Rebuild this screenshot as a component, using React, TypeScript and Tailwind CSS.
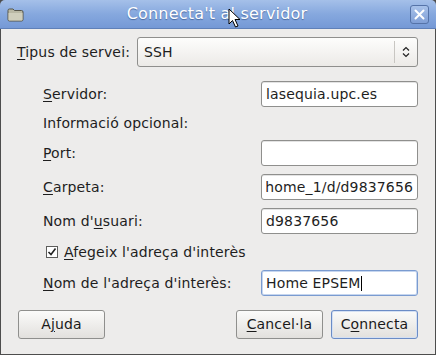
import React from 'react';

const font = { fontFamily: '"DejaVu Sans", Verdana, sans-serif' };

function U({ children }: { children: React.ReactNode }) {
  return <span className="underline underline-offset-2 decoration-1">{children}</span>;
}

function Field({ children, focused }: { children?: React.ReactNode; focused?: boolean }) {
  return (
    <div
      className={`w-[157px] h-[26px] rounded-[3px] bg-white border flex items-center px-[4px] overflow-hidden whitespace-nowrap
        ${focused ? 'border-[#7a9bd0] shadow-[inset_0_0_0_1px_#c6d6ef]' : 'border-[#8f8f8d] shadow-[inset_0_1px_0_#e3e3e3]'}`}
    >
      {children}
    </div>
  );
}

function Row({ label, children }: { label: React.ReactNode; children?: React.ReactNode }) {
  return (
    <div className="flex items-center justify-between pl-[42px] pr-[17px]">
      <span>{label}</span>
      {children}
    </div>
  );
}

function Btn({ children, def, className = '' }: { children: React.ReactNode; def?: boolean; className?: string }) {
  return (
    <button
      className={`w-[87px] h-[29px] rounded-[3px] border bg-gradient-to-b from-[#fbfbfa] to-[#e2e0dd] text-[#1a1a1a] flex items-center justify-center
        ${def ? 'border-[#6b8cc6] shadow-[inset_0_0_0_1px_#d4e0f3]' : 'border-[#8f8f8d]'} ${className}`}
    >
      {children}
    </button>
  );
}

export default function App() {
  return (
    <div className="w-[436px] h-[355px] bg-[#4d4d4d] flex flex-col text-[14px] tracking-[0.15px] text-[#1e1e1e]" style={font}>
      {/* Title bar */}
      <div className="relative h-[29px] shrink-0 rounded-t-[5px] bg-gradient-to-b from-[#a5c0e9] via-[#86a8de] to-[#7599d6] border-b border-[#5f80b8] flex items-center px-[7px]">
        <svg width="17" height="15" viewBox="0 0 17 15" className="shrink-0">
          <path d="M1 3.5 Q1 2 2.5 2 H6 L7.5 3.5 H14.5 Q16 3.5 16 5 V12.5 Q16 14 14.5 14 H2.5 Q1 14 1 12.5 Z" fill="#b9b8a4" stroke="#55554a" strokeWidth="1" />
          <path d="M1.5 6 H15.5 V12.5 Q15.5 13.5 14.5 13.5 H2.5 Q1.5 13.5 1.5 12.5 Z" fill="#cfcebc" />
        </svg>
        <div className="flex-1 text-center text-white text-[16px] font-normal tracking-[0.2px] [text-shadow:0_1px_1px_#4a6aa0]">
          Connecta't al servidor
        </div>
        <div className="w-[19px] h-[19px] rounded-[3px] border border-[#5573a8] bg-gradient-to-b from-[#a8c2ea] to-[#809fd6] flex items-center justify-center">
          <svg width="11" height="11" viewBox="0 0 11 11">
            <path d="M1.5 1.5 L9.5 9.5 M9.5 1.5 L1.5 9.5" stroke="#fff" strokeWidth="2" strokeLinecap="round" />
          </svg>
        </div>
        {/* mouse pointer */}
        <svg width="14" height="21" viewBox="0 0 14 21" className="absolute left-[228px] top-[8px]">
          <path d="M1 1 V16 L4.5 12.5 L7.5 19 L10 18 L7 11.5 H12 Z" fill="#fff" stroke="#000" strokeWidth="1" strokeLinejoin="round" />
        </svg>
      </div>

      {/* Body */}
      <div className="flex-1 mx-[1px] mb-[1px] bg-[#edeceb] flex flex-col">
        <div className="flex items-center pl-[16px] pr-[17px] pt-[8px]">
          <span className="mr-[7px]">
            <U>T</U>ipus de servei:
          </span>
          <div className="flex-1 h-[30px] rounded-[3px] border border-[#8f8f8d] bg-gradient-to-b from-[#fdfdfc] to-[#eceae7] flex items-center pl-[6px]">
            <span className="flex-1">SSH</span>
            <div className="w-px h-[22px] bg-[#c8c6c2]" />
            <svg width="22" height="16" viewBox="0 0 22 16">
              <path d="M8 6.5 L11 3.5 L14 6.5 M8 9.5 L11 12.5 L14 9.5" fill="none" stroke="#222" strokeWidth="1.2" />
            </svg>
          </div>
        </div>

        <div className="mt-[14px] flex flex-col">
          <Row label={<><U>S</U>ervidor:</>}>
            <Field>lasequia.upc.es</Field>
          </Row>
          <div className="pl-[42px] h-[33px] flex items-center">Informació opcional:</div>
          <Row label={<><U>P</U>ort:</>}>
            <Field />
          </Row>
          <div className="h-[8px]" />
          <Row label={<><U>C</U>arpeta:</>}>
            <Field>
              <div className="w-full flex justify-end overflow-hidden">
                <span>/home/home_1/d/d9837656</span>
              </div>
            </Field>
          </Row>
          <div className="h-[8px]" />
          <Row label={<>Nom d'<U>u</U>suari:</>}>
            <Field>d9837656</Field>
          </Row>
          <div className="pl-[45px] h-[36px] flex items-center">
            <div className="w-[12px] h-[12px] border border-[#5d5d5b] bg-white flex items-center justify-center mr-[6px]">
              <svg width="10" height="10" viewBox="0 0 10 10">
                <path d="M1.5 5 L4 7.5 L8.5 1.5" fill="none" stroke="#222" strokeWidth="1.6" />
              </svg>
            </div>
            <span>
              <U>A</U>fegeix l'adreça d'interès
            </span>
          </div>
          <Row label={<><U>N</U>om de l'adreça d'interès:</>}>
            <Field focused>
              Home EPSEM<span className="inline-block w-px h-[15px] bg-black ml-[1px]" />
            </Field>
          </Row>
        </div>

        <div className="flex items-center px-[17px] mt-[14px]">
          <Btn>
            A<U>j</U>uda
          </Btn>
          <div className="flex-1" />
          <Btn>
            <U>C</U>ancel·la
          </Btn>
          <Btn def className="ml-[8px]">
            C<U>o</U>nnecta
          </Btn>
        </div>
      </div>
    </div>
  );
}
